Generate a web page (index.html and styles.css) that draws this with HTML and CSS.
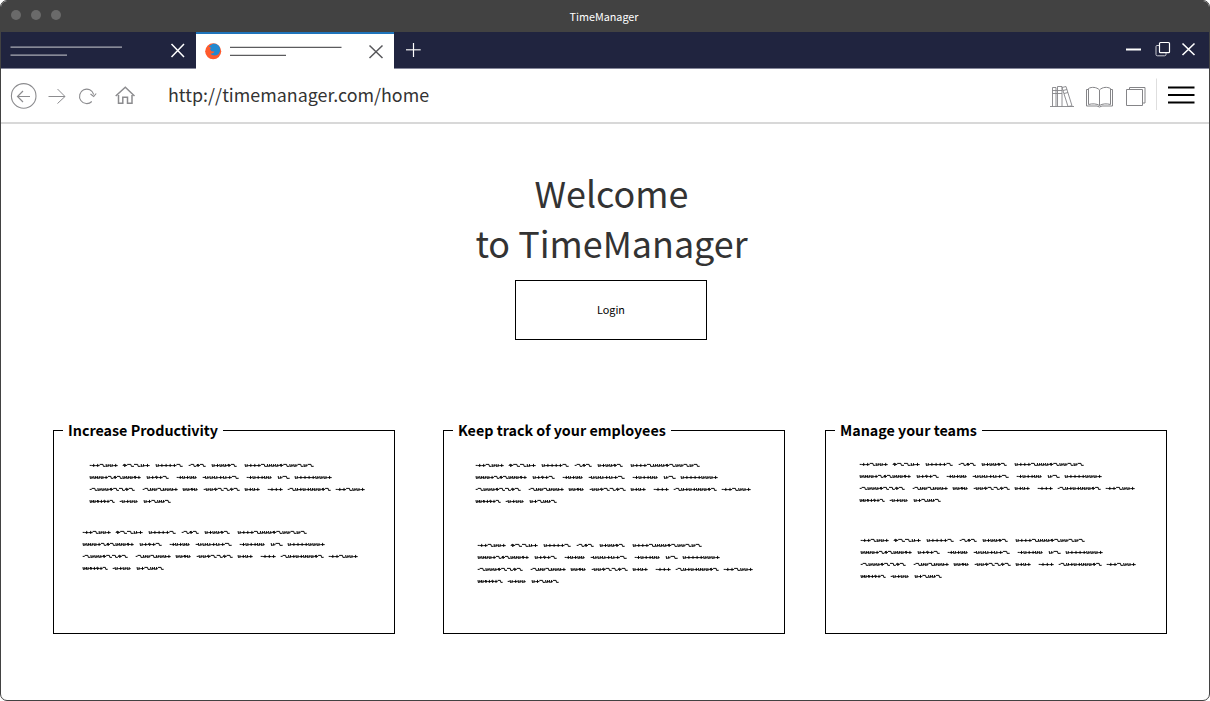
FILE: index.html
```html
<!DOCTYPE html>
<html lang="en">
<head>
<meta charset="utf-8">
<title>TimeManager</title>
<link rel="stylesheet" href="styles.css">
</head>
<body>
<div class="window">
  <header class="titlebar">
    <div class="dots"><span class="dot"></span><span class="dot"></span><span class="dot"></span></div>
    <div class="title">TimeManager</div>
  </header>
  <div class="tabs">
    <div class="tab">
      <svg class="tab-art" width="195" height="37" fill="none">
        <path d="M10.500 15.200H122M10.500 23.200H67" stroke="#a9abb5" stroke-width="1.3"/>
        <path d="M171.5 12L184 25M184 12L171.5 25" stroke="#fff" stroke-width="1.5"/>
      </svg>
    </div>
    <div class="tab active">
      <svg class="tab-art" width="198" height="35" fill="none">
        <circle cx="17.2" cy="17.3" r="8" fill="#ff5a2c"/>
        <path d="M12.800 12.500L14.500 11.300C16 9.300 20 9 22.500 11.500C25 14 24.500 18.500 22 20.500C19.500 22 16 21.500 14.500 19.800L17.500 19L18.500 17.500L15.500 17.300L14 15.500L15 13.700Z" fill="#2288d0"/>
        <path d="M34 13.300H145.500M34 21.300H90" stroke="#5b5b5e" stroke-width="1.2"/>
        <path d="M173.500 11.500L186.500 24M186.500 11.500L173.500 24" stroke="#58585b" stroke-width="1.500"/>
      </svg>
    </div>
    <svg class="new-tab" width="40" height="36" fill="none">
      <path d="M12 17.700H26.700" stroke="#c7c8ce" stroke-width="1.500"/>
      <path d="M19.500 11V25" stroke="#fff" stroke-width="1.200"/>
    </svg>
    <svg class="controls" width="84" height="36" fill="none" stroke="#fff">
      <path d="M1 17.500H16" stroke-width="2"/>
      <rect x="34.500" y="10.500" width="10" height="10.200" rx="1" stroke-width="1.200"/>
      <path d="M34 13.500H32Q31 13.500 31 14.500V22.500Q31 23.800 32.300 23.800H39.500Q41 23.800 41 22.500V21" stroke="#c9cad2"/>
      <path d="M57.500 11.500L69.500 23M69.500 11.500L57.500 23" stroke-width="1.600"/>
    </svg>
  </div>
  <nav class="navbar">
    <svg class="nav-icons" width="140" height="54" fill="none" stroke="#8c8c8f">
      <circle cx="22.700" cy="26.900" r="12.300" stroke-width="1.100"/>
      <path d="M29 27.500H16.500M22 22L16.500 27.500L22 33" stroke-width="1.200"/>
      <path d="M47.500 27.500H64M56.500 20L64 27.500L56.500 34.500"/>
      <path d="M90.800 32.500A7.200 7.200 0 1 1 92.700 25.500M89.500 25L92.700 27.500L95.200 24.500" stroke-width="1.100"/>
      <path d="M114.700 27L124.300 18.300L133.500 27M117.500 26V34.300H121.800V28.300H126.500V34.300H131V26" stroke-width="1.500"/>
    </svg>
    <div class="url">http://timemanager.com/home</div>
    <svg class="tool-icons" width="150" height="54" fill="none" stroke="#858588">
      <path d="M0 37.500H24M2.500 37.500V18.500H6V37.500M7.500 37.500V17.500H12V37.500M12 18.500L16 17.500L22 36.800L18 37.500ZM2.500 21.500H12M2.500 24.500H12M13 21.500L17 20.500M14 24.500L18 23.500" stroke-width=".9"/>
      <path d="M49.500 21C46.500 17.800 41.500 17.800 38.500 19.500V35.500C42 34.500 46.500 34.500 49.500 36.500C52.500 34.500 57 34.500 60.500 35.500V19.500C57.500 17.800 52.500 17.800 49.500 21V36.500M38.500 20.500H36.500V37H47L49.500 38L52 37H62.500V20.500H60.500"/>
      <path d="M76.500 20.500H92.500V36.500H76.500ZM79.500 20V18.500H95V34H93"/>
      <path d="M106.500 9.500V41" stroke="#dedede"/>
      <path d="M118 18.500H144.500M118 26H144.500M118 33.500H144.500" stroke="#000" stroke-width="2"/>
    </svg>
  </nav>
  <main class="page">
    <h1 class="welcome">Welcome<br>to TimeManager</h1>
    <button class="login">Login</button>
    <section class="cards">
      <fieldset class="card productivity">
        <legend>Increase Productivity</legend>
        <svg class="scribble first"></svg>
        <svg class="scribble second"></svg>
      </fieldset>
      <fieldset class="card employees">
        <legend>Keep track of your employees</legend>
        <svg class="scribble first"></svg>
        <svg class="scribble second"></svg>
      </fieldset>
      <fieldset class="card teams">
        <legend>Manage your teams</legend>
        <svg class="scribble first"></svg>
        <svg class="scribble second"></svg>
      </fieldset>
    </section>
  </main>
</div>
<script src="scribble.js"></script>
</body>
</html>
```
FILE: styles.css
```css
* { box-sizing: border-box; }
body {
  margin: 0;
  background: #fff;
  font-family: "Noto Sans CJK SC", "Noto Sans", sans-serif;
}
svg { display: block; flex: none; }
.window {
  width: 1210px;
  height: 701px;
  display: flex;
  flex-direction: column;
  border: 1px solid #424242;
  border-radius: 7px;
  overflow: hidden;
}
.titlebar {
  height: 31px;
  flex: none;
  display: grid;
  grid-template-columns: 1fr auto 1fr;
  align-items: center;
  padding: 0 12px 1px 10px;
  background: #424242;
}
.dots { display: flex; gap: 10px; padding-bottom: 2px; }
.dot { width: 10px; height: 10px; border-radius: 50%; background: #6a6a6a; }
.title { color: #fff; font-size: 10.8px; line-height: 16px; }
.tabs {
  height: 37px;
  flex: none;
  display: flex;
  background: #20243f;
  border-bottom: 1px solid #85879a;
}
.tab { width: 195px; height: 36px; }
.tab-art { margin-left: -1px; }
.tab.active {
  width: 198px;
  height: 37px;
  background: #fff;
  border-top: 2px solid #1f74bb;
}
.active .tab-art { margin-left: 0; }
.controls { margin-left: auto; }
.navbar {
  height: 55px;
  flex: none;
  display: flex;
  align-items: flex-start;
  border-bottom: 2px solid #d8d8d8;
}
.url {
  margin: 11px auto 0 27px;
  color: #333;
  font-size: 17.87px;
  line-height: 28px;
}
.tool-icons { margin-right: 9px; }
.page {
  display: flex;
  flex-direction: column;
  align-items: center;
  flex: 1;
}
.welcome {
  margin: 43px 0 0 13px;
  color: #333;
  font-size: 35.9px;
  font-weight: 400;
  line-height: 50px;
  text-align: center;
}
.login {
  width: 192px;
  height: 60px;
  margin: 13px 0 0 12px;
  padding: 0 0 2px;
  border: 1px solid #000;
  background: #fff;
  color: #000;
  font: 10.8px/16px "Noto Sans CJK SC", "Noto Sans", sans-serif;
}
.cards {
  display: flex;
  align-self: flex-start;
  margin: 80px 0 0 52px;
}
.card {
  width: 342px;
  height: 214px;
  margin: 0;
  padding: 0 9px;
  border: 1px solid #000;
}
.employees { margin-left: 48px; }
.teams { margin-left: 40px; }
.card legend {
  padding: 0 5px 2px;
  font-size: 14.3px;
  font-weight: 700;
  line-height: 19px;
}
.scribble { width: 280px; height: 44px; }
.productivity .first { margin: 20px 0 0 26px; }
.productivity .second { margin: 23px 0 0 19px; }
.employees .first { margin: 20px 0 0 22px; }
.employees .second { margin: 36px 0 0 24px; }
.teams .first { margin: 19px 0 0 24px; }
.teams .second { margin: 32px 0 0 25px; }
```
FILE: scribble.js
```js
// Each word: start, end, and its strokes (t = cross, z = hook, u = double tick, o = loop, - = lead-in).
const lines = [
  [[0,28,"-ttzuut"],[33,60,"ozzut"],[66,93,"uttttz"],[99,116,"-zoz"],[122,147,"utuuoz"],[155,224,"utttzuuuozuuzuz"]],
  [[0,51,"uuuutzozuuuot"],[57,79,"utotz"],[87,107,"-tutuu"],[113,149,"-uuututz"],[157,182,"-tuttuu"],[188,200,"uz"],[205,242,"uttttuuut"]],
  [[0,45,"-zuuuozzoz"],[53,88,"-zuuzuuut"],[93,108,"uuou"],[114,150,"-uuozzoz"],[155,170,"utut"],[178,193,"-ttt"],[198,241,"-zututuuuoz"],[246,275,"-ttzuut"]],
  [[0,25,"uuototz"],[30,48,"-utuu"],[54,81,"utzuuz"]]
];
const strokes = {
  "-": [2, () => [[0,0,2,0]]],
  t: [4, () => [[0,.2,4,.2],[2,-1.5,2,1.5]]],
  z: [6, () => [[0,-1,3.3,-1],[3.3,-1,3.7,1],[3.7,1,6,.9]]],
  u: [4, () => [[.4,-1.4,.7,1],[.4,1,4,.2],[2.5,-1.3,2.5,1]]],
  o: [4, () => [[0,0,2,-1.3],[2,-1.3,2.7,0],[2.7,0,2,1.3],[2,1.3,.7,0],[.7,0,4,0]]]
};
let d = "";
lines.forEach((words, row) => words.forEach(([start, end, code]) => {
  const total = [...code].reduce((sum, c) => sum + strokes[c][0], 0);
  const scale = (end - start) / total;
  let x = start + .7;
  for (const c of code) {
    const [width, draw] = strokes[c];
    const y = 4.4 + row * 12;
    for (const [a, b, e, f] of draw()) {
      d += `M${(x + a * scale).toFixed(1)} ${(y + b).toFixed(1)}L${(x + e * scale).toFixed(1)} ${(y + f).toFixed(1)}`;
    }
    x += width * scale;
  }
}));
document.querySelectorAll(".scribble").forEach(svg => {
  svg.innerHTML = `<path d="${d}" fill="none" stroke="#000" stroke-width=".95"/>`;
});
```
